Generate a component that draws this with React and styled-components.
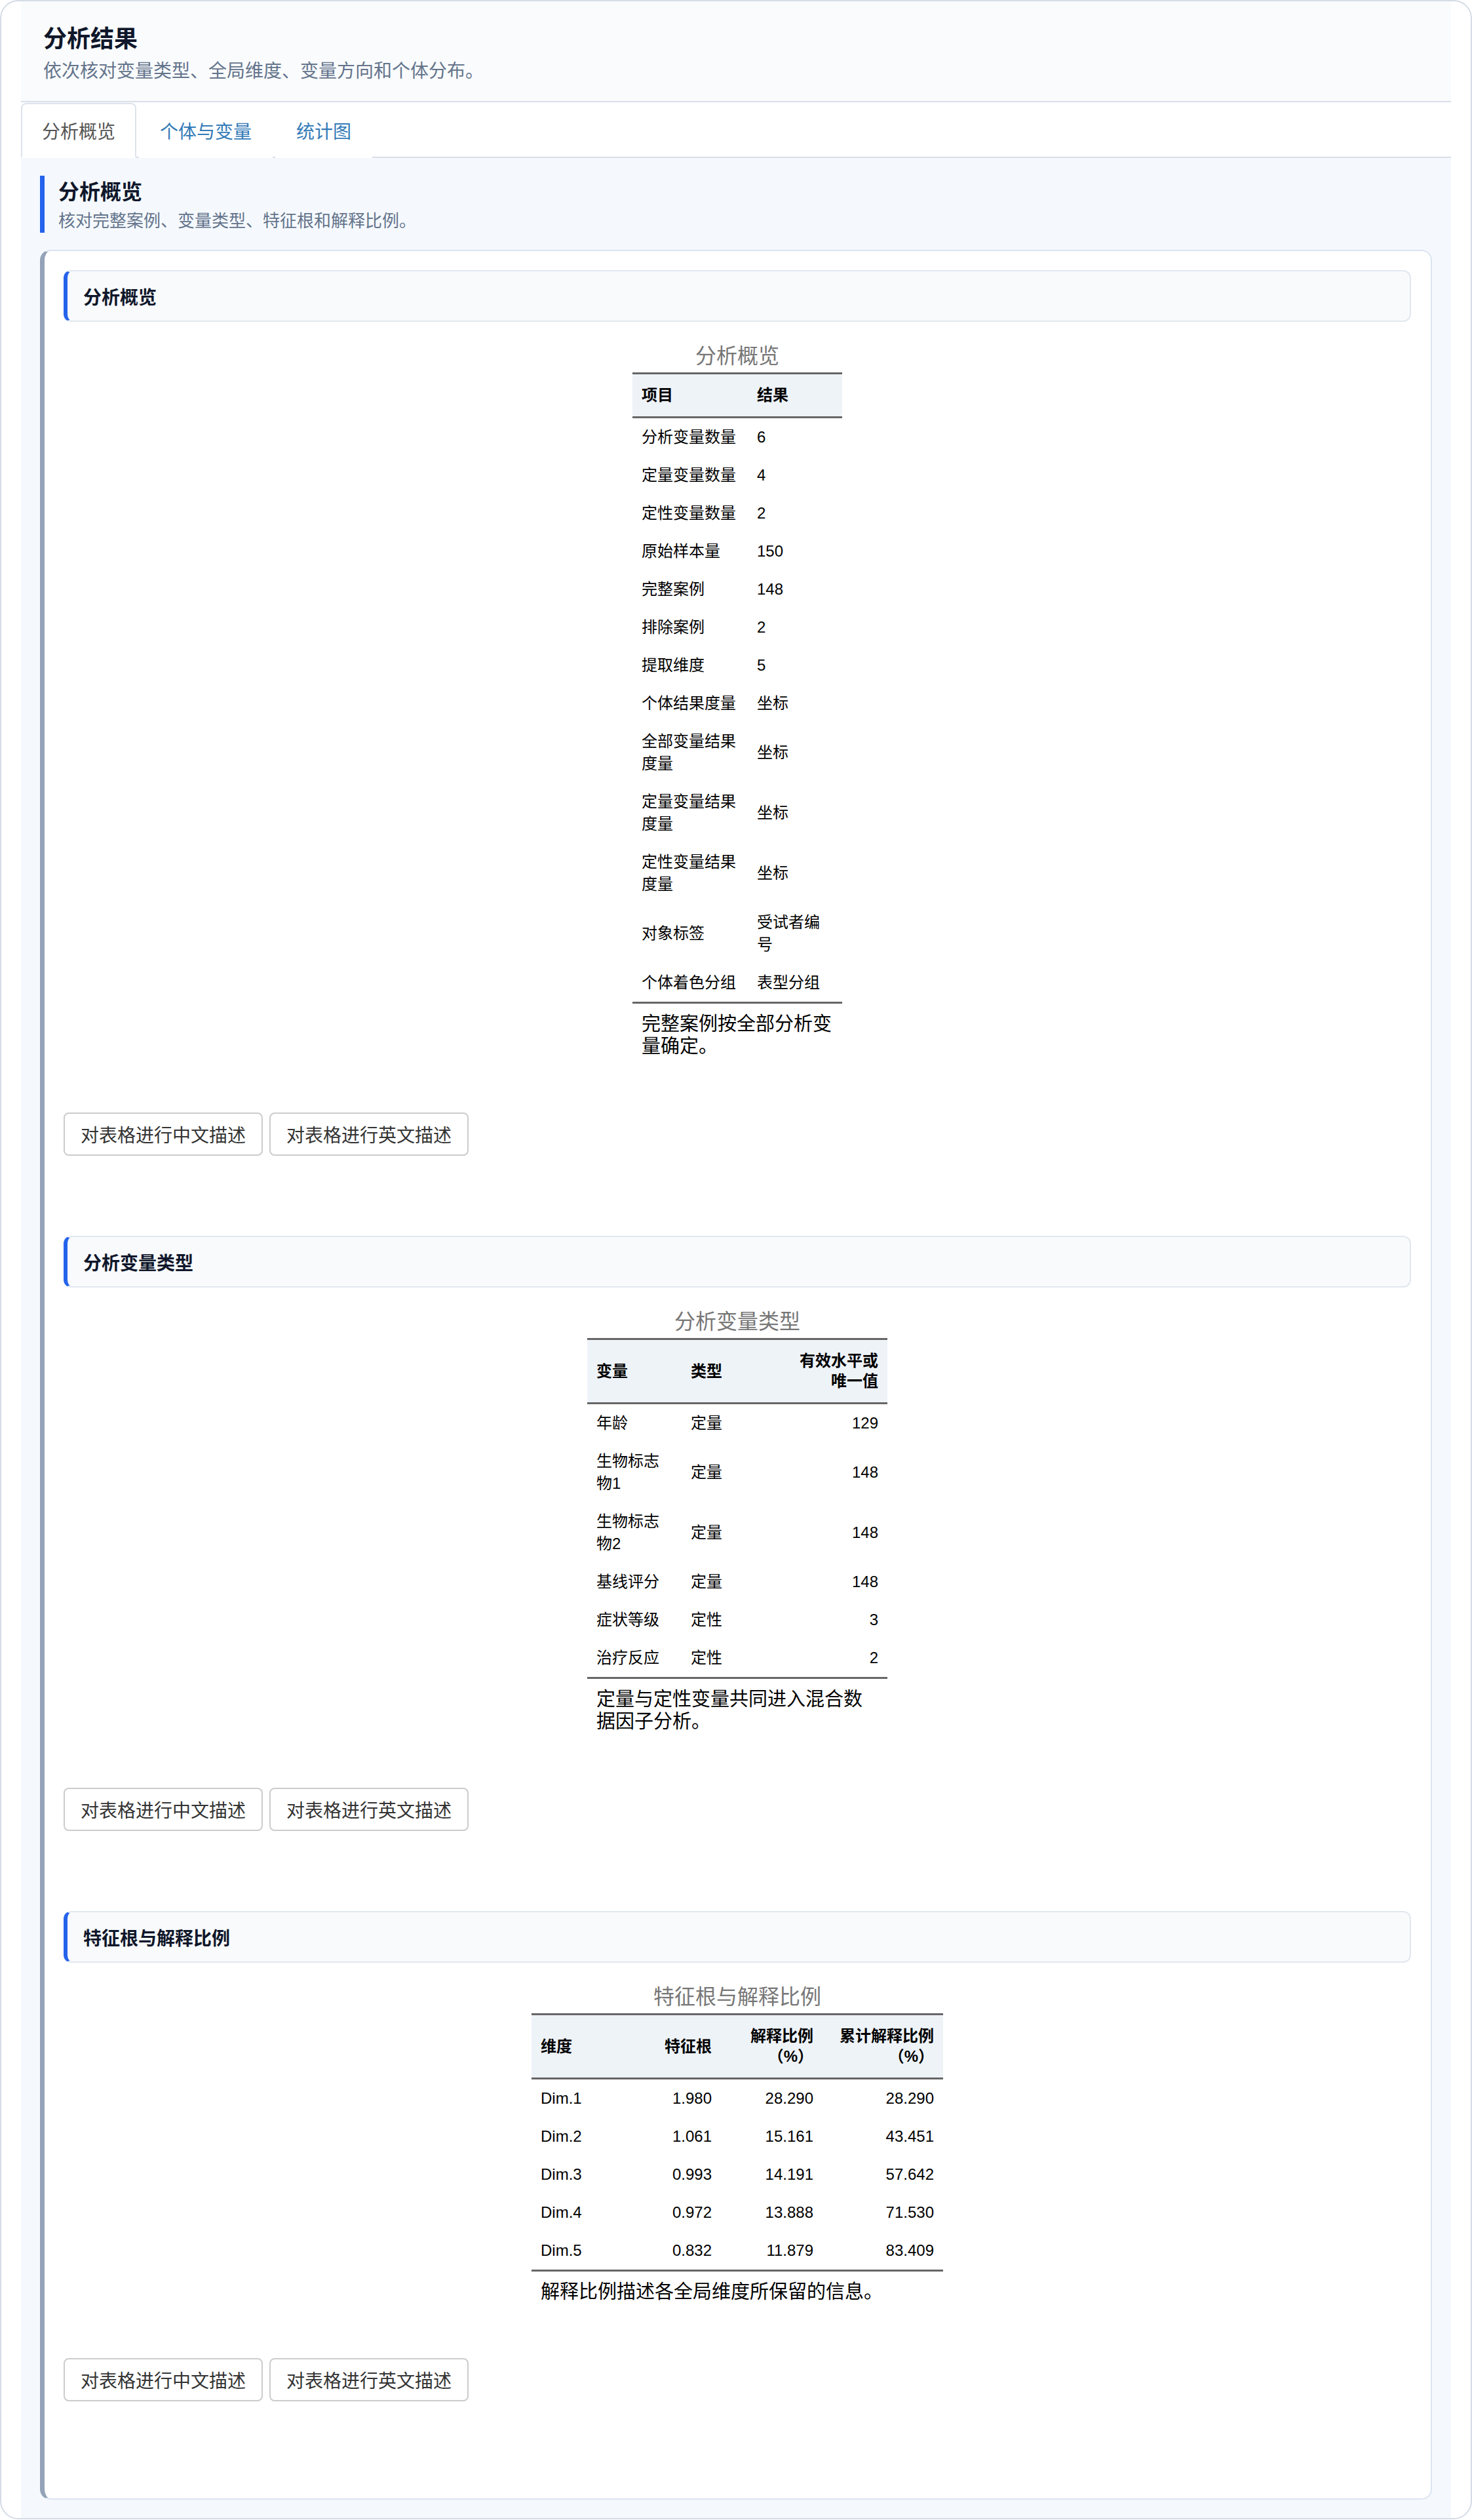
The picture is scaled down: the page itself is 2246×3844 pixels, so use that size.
import React from "react";
import styled, { createGlobalStyle } from "styled-components";

const GlobalStyle = createGlobalStyle`
  html, body {
    margin: 0;
    padding: 0;
    background: #ffffff;
  }
  body {
    font-family: "Noto Sans CJK SC", "Liberation Sans", sans-serif;
    color: #333333;
  }
  * {
    box-sizing: border-box;
  }
`;

const Shell = styled.div`
  border: 2px solid #d5dce7;
  border-radius: 28px;
  background: #ffffff;
  padding: 0 30px;
  overflow: hidden;
`;

const Header = styled.header`
  background: #f9fbfd;
  border-bottom: 2px solid #d9dee8;
  padding: 32px 34px 28px;
`;

const PageTitle = styled.h1`
  margin: 0;
  font-size: 36px;
  font-weight: 700;
  line-height: 44px;
  color: #0f172a;
`;

const PageSub = styled.p`
  margin: 8px 0 0;
  font-size: 28px;
  line-height: 40px;
  color: #64748b;
`;

const TabList = styled.nav`
  display: flex;
  gap: 4px;
  padding-top: 1px;
  background: #ffffff;
  border-bottom: 2px solid #d9dee8;
`;

const Tab = styled.span`
  display: block;
  margin-bottom: -2px;
  padding: 20px 30px;
  font-size: 28px;
  line-height: 40px;
  border: 2px solid ${(p) => (p.$active ? "#dde3ec" : "transparent")};
  border-bottom-color: ${(p) => (p.$active ? "#ffffff" : "transparent")};
  border-radius: 8px 8px 0 0;
  background: #ffffff;
  color: ${(p) => (p.$active ? "#555555" : "#337ab7")};
  cursor: pointer;
`;

const Panel = styled.main`
  background: #f5f9fe;
  padding: 27px 29px 28px;
`;

const Intro = styled.div`
  border-left: 7px solid #2563eb;
  padding-left: 21px;
  margin-bottom: 26px;
`;

const IntroTitle = styled.h2`
  margin: 0;
  font-size: 32px;
  font-weight: 700;
  line-height: 44px;
  color: #0f172a;
`;

const IntroSub = styled.p`
  margin: 3px 0 0;
  font-size: 26px;
  line-height: 40px;
  color: #64748b;
`;

const Card = styled.section`
  background: #ffffff;
  border: 2px solid #dbe4f0;
  border-left: 7px solid #94a3b8;
  border-radius: 16px;
  padding: 29px 30px 26px 29px;
`;

const Block = styled.div`
  padding-bottom: 122px;
`;

const BlockHead = styled.div`
  background: #f8fafc;
  border: 2px solid #e2e8f0;
  border-left: 6px solid #2563eb;
  border-radius: 12px;
  padding: 18px 24px 17px;
  font-size: 28px;
  font-weight: 700;
  line-height: 40px;
  color: #0f172a;
`;

const TableWrap = styled.div`
  display: flex;
  justify-content: center;
  padding-top: 31px;
`;

const StatTable = styled.table`
  width: ${(p) => p.$width}px;
  table-layout: fixed;
  border-collapse: collapse;
  font-family: "Liberation Sans", "Noto Sans CJK SC", sans-serif;
  font-size: 24px;
  color: #000000;

  caption {
    padding-bottom: 4px;
    font-size: 32px;
    line-height: 42px;
    color: #777777;
    text-align: center;
  }

  thead tr {
    background: #eef3f8;
    border-top: 3px solid #666666;
    border-bottom: 3px solid #666666;
  }

  th {
    padding: 16px 14px 17px;
    font-weight: 700;
    line-height: 31px;
    vertical-align: middle;
  }

  tbody {
    border-bottom: 3px solid #666666;
  }

  td {
    padding: 12px 14px;
    line-height: 34px;
    vertical-align: middle;
  }

  tfoot td {
    padding: 14px 14px 0;
    font-size: 29px;
    line-height: 34px;
    text-align: left;
  }
`;

const Cell = styled.td`
  text-align: ${(p) => (p.$right ? "right" : "left")};
`;

const HeadCell = styled.th`
  text-align: ${(p) => (p.$right ? "right" : "left")};
`;

const ActionRow = styled.div`
  display: flex;
  gap: 10px;
  margin-top: 84px;
`;

const ActionButton = styled.button`
  font-family: "Noto Sans CJK SC", sans-serif;
  font-size: 28px;
  line-height: 40px;
  padding: 11px 24px;
  border: 2px solid #cccccc;
  border-radius: 8px;
  background: #ffffff;
  color: #333333;
  cursor: pointer;
`;

const sections = [
  {
    title: "分析概览",
    width: 320,
    cols: [176, 144],
    head: ["项目", "结果"],
    right: [false, false],
    rows: [
      ["分析变量数量", "6"],
      ["定量变量数量", "4"],
      ["定性变量数量", "2"],
      ["原始样本量", "150"],
      ["完整案例", "148"],
      ["排除案例", "2"],
      ["提取维度", "5"],
      ["个体结果度量", "坐标"],
      ["全部变量结果度量", "坐标"],
      ["定量变量结果度量", "坐标"],
      ["定性变量结果度量", "坐标"],
      ["对象标签", "受试者编号"],
      ["个体着色分组", "表型分组"],
    ],
    note: "完整案例按全部分析变量确定。",
  },
  {
    title: "分析变量类型",
    width: 458,
    cols: [144, 164, 150],
    head: ["变量", "类型", "有效水平或唯一值"],
    right: [false, false, true],
    rows: [
      ["年龄", "定量", "129"],
      ["生物标志物1", "定量", "148"],
      ["生物标志物2", "定量", "148"],
      ["基线评分", "定量", "148"],
      ["症状等级", "定性", "3"],
      ["治疗反应", "定性", "2"],
    ],
    note: "定量与定性变量共同进入混合数据因子分析。",
  },
  {
    title: "特征根与解释比例",
    width: 628,
    cols: [148, 141, 155, 184],
    head: ["维度", "特征根", "解释比例（%）", "累计解释比例（%）"],
    right: [false, true, true, true],
    rows: [
      ["Dim.1", "1.980", "28.290", "28.290"],
      ["Dim.2", "1.061", "15.161", "43.451"],
      ["Dim.3", "0.993", "14.191", "57.642"],
      ["Dim.4", "0.972", "13.888", "71.530"],
      ["Dim.5", "0.832", "11.879", "83.409"],
    ],
    note: "解释比例描述各全局维度所保留的信息。",
  },
];

const ResultTable = ({ section }) => (
  <StatTable $width={section.width}>
    <caption>{section.title}</caption>
    <colgroup>
      {section.cols.map((w, i) => (
        <col key={i} style={{ width: w }} />
      ))}
    </colgroup>
    <thead>
      <tr>
        {section.head.map((label, i) => (
          <HeadCell key={i} $right={section.right[i]}>
            {label}
          </HeadCell>
        ))}
      </tr>
    </thead>
    <tbody>
      {section.rows.map((row, r) => (
        <tr key={r}>
          {row.map((value, i) => (
            <Cell key={i} $right={section.right[i]}>
              {value}
            </Cell>
          ))}
        </tr>
      ))}
    </tbody>
    <tfoot>
      <tr>
        <td colSpan={section.cols.length}>{section.note}</td>
      </tr>
    </tfoot>
  </StatTable>
);

const App = () => {
  return (
    <>
      <GlobalStyle />
      <Shell>
        <Header>
          <PageTitle>分析结果</PageTitle>
          <PageSub>依次核对变量类型、全局维度、变量方向和个体分布。</PageSub>
        </Header>
        <TabList>
          <Tab $active>分析概览</Tab>
          <Tab>个体与变量</Tab>
          <Tab>统计图</Tab>
        </TabList>
        <Panel>
          <Intro>
            <IntroTitle>分析概览</IntroTitle>
            <IntroSub>核对完整案例、变量类型、特征根和解释比例。</IntroSub>
          </Intro>
          <Card>
            {sections.map((section) => (
              <Block key={section.title}>
                <BlockHead>{section.title}</BlockHead>
                <TableWrap>
                  <ResultTable section={section} />
                </TableWrap>
                <ActionRow>
                  <ActionButton>对表格进行中文描述</ActionButton>
                  <ActionButton>对表格进行英文描述</ActionButton>
                </ActionRow>
              </Block>
            ))}
          </Card>
        </Panel>
      </Shell>
    </>
  );
};

export default App;
